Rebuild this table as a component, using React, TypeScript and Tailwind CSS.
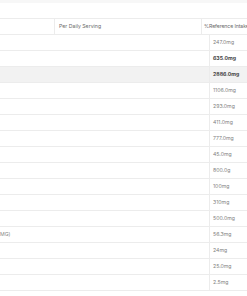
import React from 'react';

const rows: { value: string; bold?: boolean; shaded?: boolean; label?: string }[] = [
  { value: '247.0mg' },
  { value: '635.0mg', bold: true },
  { value: '2886.0mg', bold: true, shaded: true },
  { value: '1106.0mg' },
  { value: '293.0mg' },
  { value: '411.0mg' },
  { value: '777.0mg' },
  { value: '45.0mg' },
  { value: '800.0g' },
  { value: '100mg' },
  { value: '310mg' },
  { value: '500.0mg' },
  { value: '56.3mg', label: 'MG)' },
  { value: '24mg' },
  { value: '25.0mg' },
  { value: '2.5mg' },
];

export default function App() {
  return (
    <div
      className="w-[247px] h-[296px] overflow-hidden bg-white text-[5.2px] text-[#808080]"
      style={{ fontFamily: 'Inter, "Noto Sans", sans-serif' }}
    >
      <div className="h-[19px] border-b border-[#ececec]">
        <div className="h-[3px] bg-[#f7f7f7]" />
      </div>

      <div className="flex h-[16px] border-b border-[#ececec] text-[#6a6a6a]">
        <div className="w-[55px] shrink-0 border-r border-[#ececec]" />
        <div className="w-[147px] shrink-0 border-r border-[#ececec] flex items-center pl-[4px]">
          Per Daily Serving
        </div>
        <div className="flex-1 flex items-center pl-[2px] whitespace-nowrap tracking-[-0.1px]">
          %Reference Intake
        </div>
      </div>

      {rows.map((row, i) => (
        <div
          key={i}
          className={`flex h-[16px] border-b border-[#ececec] ${row.shaded ? 'bg-[#f2f2f2]' : ''}`}
        >
          <div className="w-[210px] shrink-0 border-r border-[#ececec] flex items-center">
            {row.label && <span className="text-[#888]">{row.label}</span>}
          </div>
          <div
            className={`flex-1 flex items-center pl-[3px] whitespace-nowrap ${
              row.bold ? 'font-bold text-[#444]' : ''
            }`}
          >
            {row.value}
          </div>
        </div>
      ))}
    </div>
  );
}
